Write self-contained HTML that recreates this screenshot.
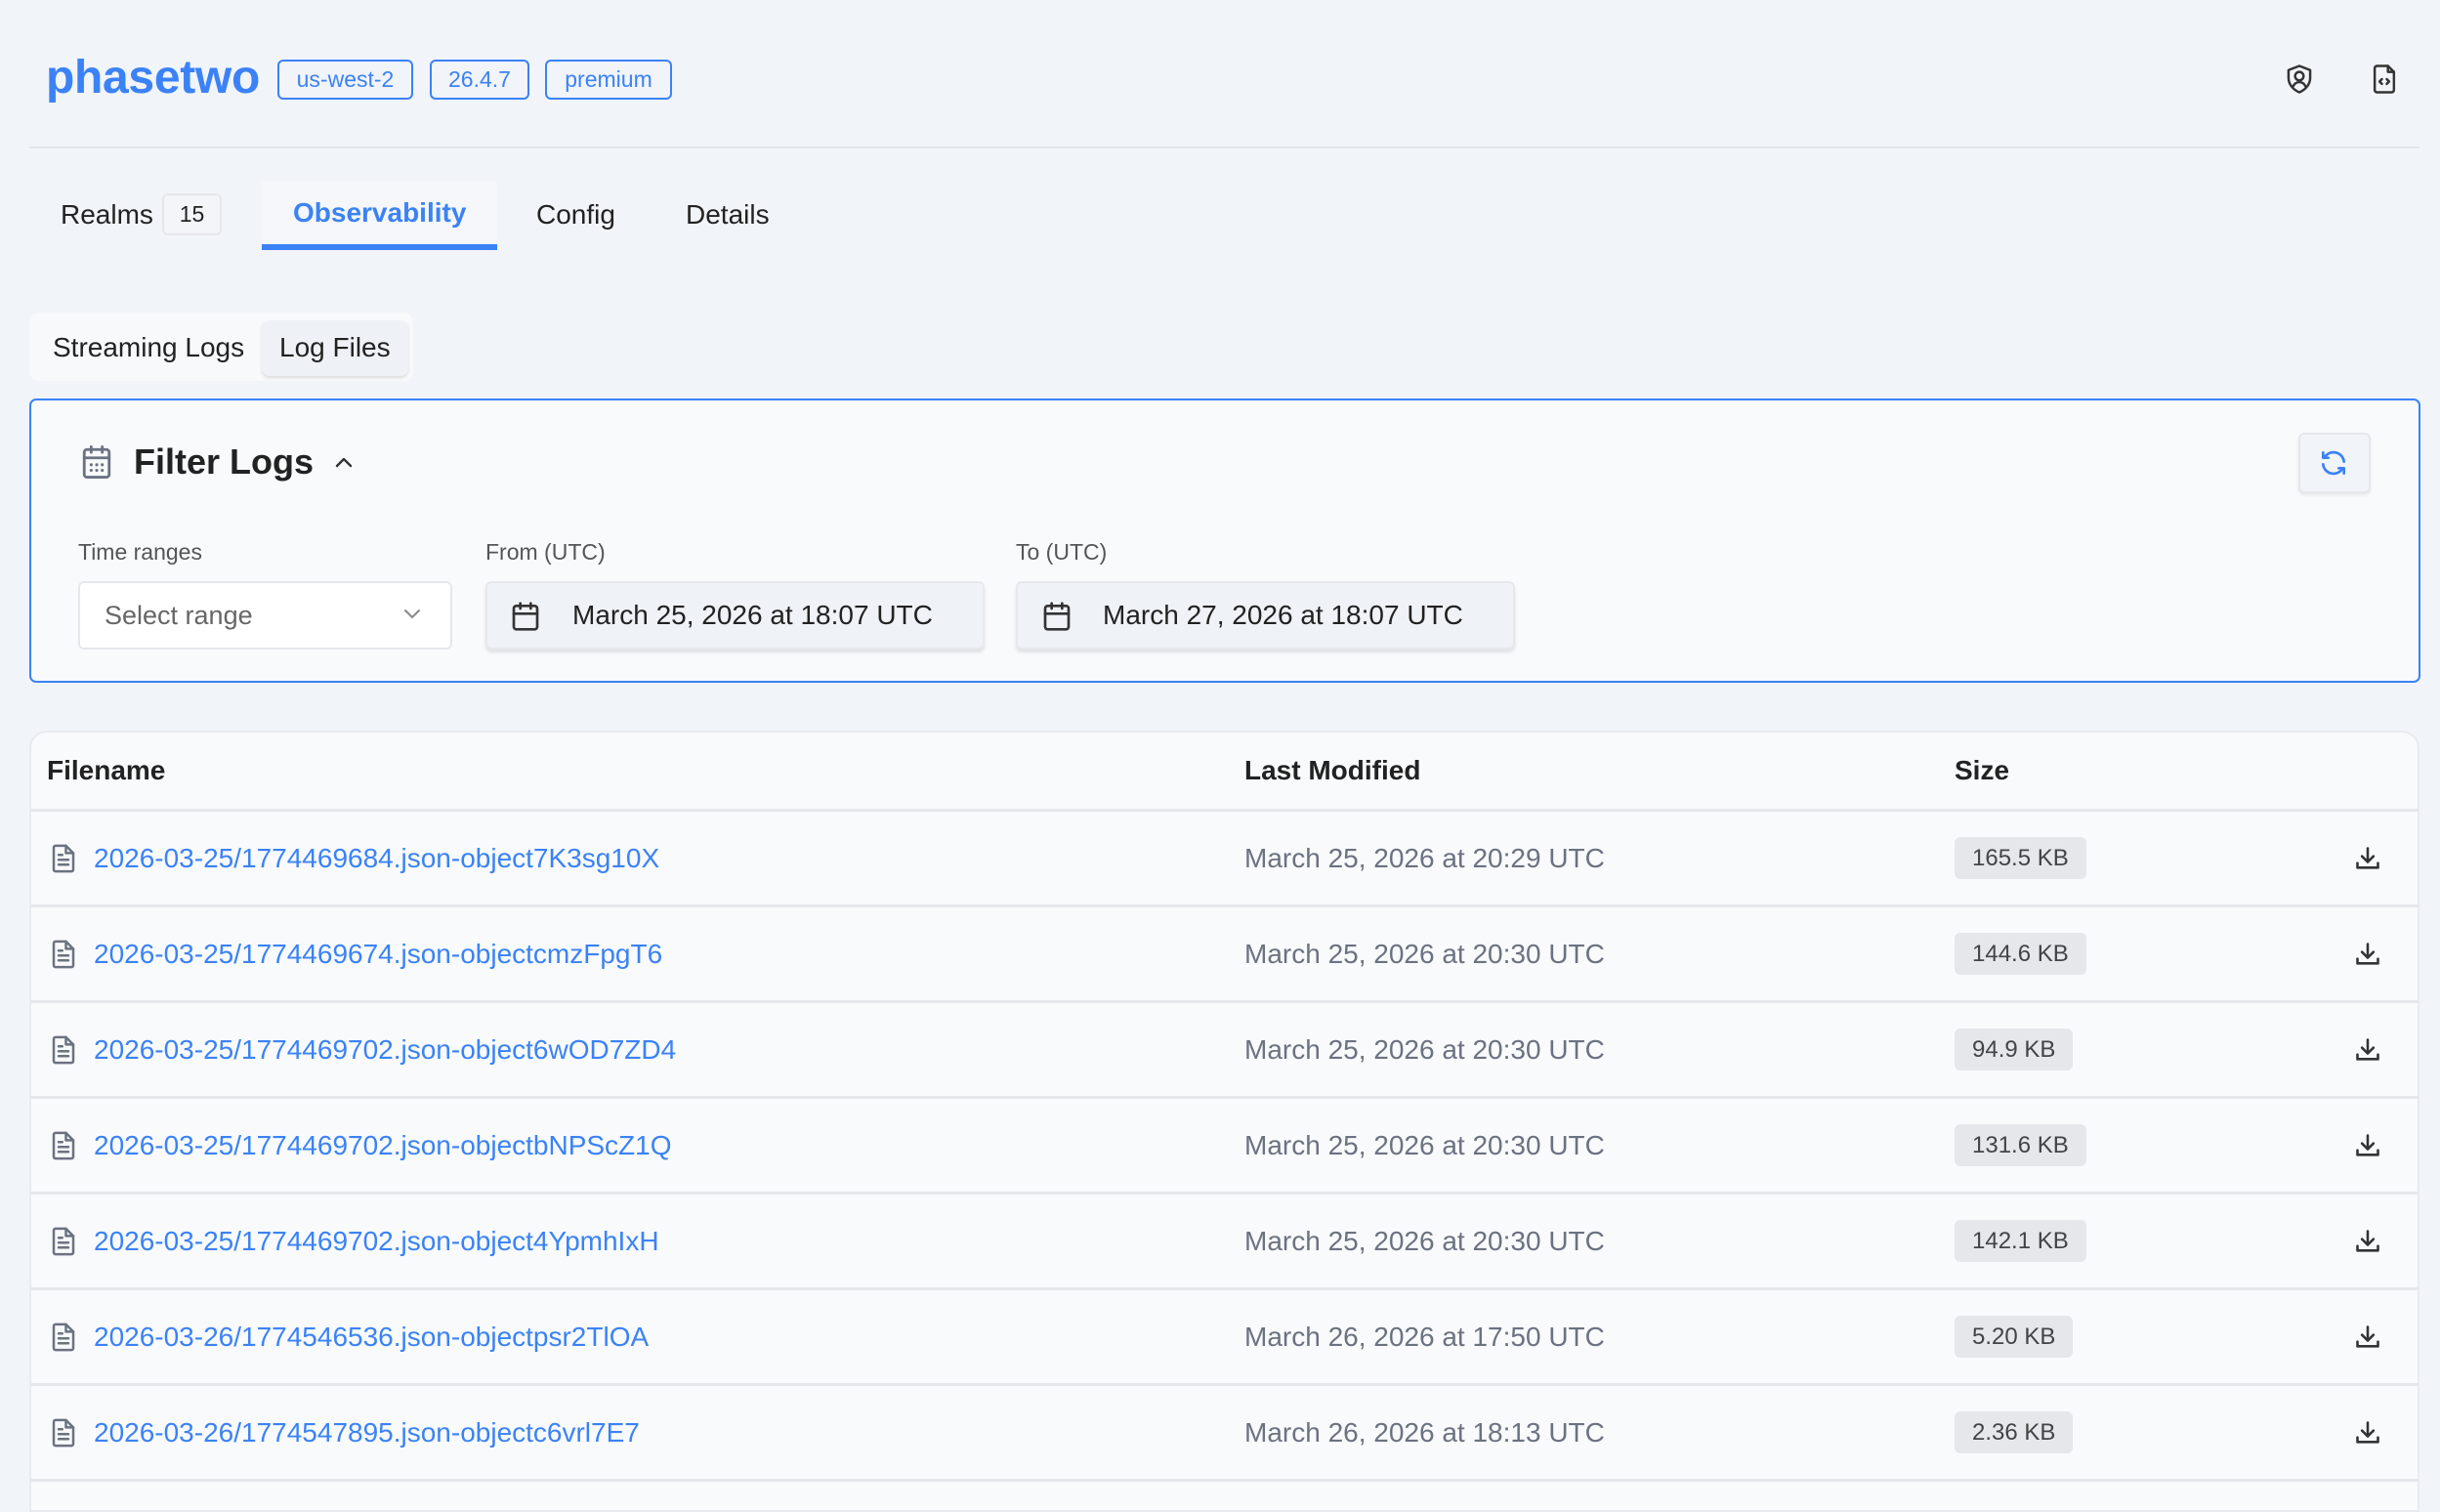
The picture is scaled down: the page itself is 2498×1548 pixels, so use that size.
<!DOCTYPE html>
<html><head><meta charset="utf-8">
<style>
*{box-sizing:border-box;margin:0;padding:0}
body{width:2498px;height:1522px;overflow:hidden;background:#f1f4f9;font-family:"Liberation Sans",Arial,sans-serif;position:relative;color:#222}
.a{position:absolute}
.badge{position:absolute;top:61px;height:41px;border:2px solid #3b82f6;border-radius:6px;color:#3b82f6;font-size:23px;display:flex;align-items:center;justify-content:center}
.tab{position:absolute;font-size:28px;color:#222;top:204px}
.lbl{position:absolute;top:552px;font-size:23px;color:#555}
.inp{position:absolute;top:595px;height:70px;border-radius:6px;display:flex;align-items:center;font-size:28px}
.row{position:absolute;left:32px;width:2444px;height:98px;border-bottom:3px solid #e5e7eb}
.row .ic{position:absolute;left:20px;top:33px}
.row .fn{position:absolute;left:64px;top:32px;font-size:28px;color:#3b82f6}
.row .dt{position:absolute;left:1242px;top:32px;font-size:28px;color:#6b7280}
.row .sz{position:absolute;left:1969px;top:26px;height:43px;padding:0 18px;background:#e5e7eb;border-radius:6px;font-size:24px;color:#444;display:flex;align-items:center}
.row .dl{position:absolute;left:2378px;top:33px}
</style></head><body>
<div class="a" style="left:47px;top:52px;font-size:48px;font-weight:bold;color:#3b82f6;letter-spacing:-0.3px">phasetwo</div>
<div class="badge" style="left:284px;width:139px">us-west-2</div>
<div class="badge" style="left:440px;width:102px">26.4.7</div>
<div class="badge" style="left:558px;width:130px">premium</div>
<svg class="a" style="left:2339px;top:65px" width="30" height="32" viewBox="0 0 24 26" fill="none" stroke="#333" stroke-width="2" stroke-linecap="round" stroke-linejoin="round"><path d="M12 2 L21 5.5 V12 C21 18 16.5 22 12 24 C7.5 22 3 18 3 12 V5.5 Z"/><circle cx="12" cy="10.5" r="3.5"/><path d="M6.5 19.5 C8 16.5 10 15.5 12 15.5 C14 15.5 16 16.5 17.5 19.5"/></svg>
<svg class="a" style="left:2428px;top:65px" width="26" height="32" viewBox="0 0 20 26" fill="none" stroke="#333" stroke-width="2" stroke-linecap="round" stroke-linejoin="round"><path d="M2 4 a2 2 0 0 1 2-2 H13 L18 7 V22 a2 2 0 0 1-2 2 H4 a2 2 0 0 1-2-2 Z"/><path d="M13 2 V7 H18"/><path d="M8 13 L6 15 L8 17 M12 13 L14 15 L12 17"/></svg>
<div class="a" style="left:30px;top:150px;width:2447px;height:2px;background:#e3e6eb"></div>

<div class="tab" style="left:62px">Realms</div>
<div class="a" style="left:166px;top:198px;width:61px;height:43px;border:2px solid #e5e7eb;border-radius:6px;font-size:23px;display:flex;align-items:center;justify-content:center;background:#f3f5f8">15</div>
<div class="a" style="left:268px;top:186px;width:241px;height:69px;background:#f5f7fa"></div>
<div class="tab" style="left:300px;top:202px;color:#3b82f6;font-weight:bold">Observability</div>
<div class="a" style="left:268px;top:250px;width:241px;height:6px;background:#3b82f6"></div>
<div class="tab" style="left:549px">Config</div>
<div class="tab" style="left:702px">Details</div>

<div class="a" style="left:30px;top:320px;width:393px;height:70px;background:#f8f9fb;border-radius:10px"></div>
<div class="a" style="left:54px;top:340px;font-size:28px">Streaming Logs</div>
<div class="a" style="left:268px;top:328px;width:150px;height:57px;background:#eef1f5;border-radius:8px;box-shadow:0 2px 3px rgba(0,0,0,.12)"></div>
<div class="a" style="left:286px;top:340px;font-size:28px">Log Files</div>

<div class="a" style="left:30px;top:408px;width:2448px;height:291px;border:2px solid #3b82f6;border-radius:7px;background:#f8fafc"></div>
<svg class="a" style="left:82px;top:454px" width="34" height="38" viewBox="0 0 24 26" fill="none" stroke="#6b7280" stroke-width="2" stroke-linecap="round"><rect x="3" y="4" width="18" height="20" rx="2"/><path d="M3 10 H21 M8 2 V6 M16 2 V6"/><path d="M8 15h.01M12 15h.01M16 15h.01M8 19h.01M12 19h.01M16 19h.01" stroke-width="2.2"/></svg>
<div class="a" style="left:137px;top:452px;font-size:36px;font-weight:bold;color:#222">Filter Logs</div>
<svg class="a" style="left:340px;top:465px" width="24" height="16" viewBox="0 0 24 16" fill="none" stroke="#333" stroke-width="2.4" stroke-linecap="round" stroke-linejoin="round"><path d="M5 12 L12 5 L19 12"/></svg>
<div class="a" style="left:2353px;top:443px;width:74px;height:62px;background:#f1f4f9;border:2px solid #e5e7eb;border-radius:6px;box-shadow:0 2px 3px rgba(0,0,0,.08)"></div>
<svg class="a" style="left:2373px;top:458px" width="32" height="32" viewBox="0 0 24 24" fill="none" stroke="#3b82f6" stroke-width="2" stroke-linecap="round" stroke-linejoin="round"><path d="M20 11 A8 8 0 0 0 5 8 M4 4 V8 H8"/><path d="M4 13 A8 8 0 0 0 19 16 M20 20 V16 H16"/></svg>

<div class="lbl" style="left:80px">Time ranges</div>
<div class="lbl" style="left:497px">From (UTC)</div>
<div class="lbl" style="left:1040px">To (UTC)</div>
<div class="inp" style="left:80px;width:383px;background:#fff;border:2px solid #e5e7eb;color:#666;padding-left:25px;font-size:27px">Select range</div>
<svg class="a" style="left:411px;top:622px" width="22" height="14" viewBox="0 0 22 14" fill="none" stroke="#888" stroke-width="2" stroke-linecap="round"><path d="M4 3 L11 10 L18 3"/></svg>
<div class="inp" style="left:497px;width:511px;background:#eff2f7;border:2px solid #e6e8ec;box-shadow:0 3px 3px rgba(0,0,0,.1);padding-left:87px;color:#222">March 25, 2026 at 18:07 UTC</div>
<div class="inp" style="left:1040px;width:511px;background:#eff2f7;border:2px solid #e6e8ec;box-shadow:0 3px 3px rgba(0,0,0,.1);padding-left:87px;color:#222">March 27, 2026 at 18:07 UTC</div>
<svg class="a" style="left:522px;top:615px" width="32" height="32" viewBox="0 0 24 24" fill="none" stroke="#333" stroke-width="2" stroke-linecap="round"><rect x="3" y="4" width="18" height="18" rx="2"/><path d="M3 10 H21 M8 2 V6 M16 2 V6"/></svg>
<svg class="a" style="left:1066px;top:615px" width="32" height="32" viewBox="0 0 24 24" fill="none" stroke="#333" stroke-width="2" stroke-linecap="round"><rect x="3" y="4" width="18" height="18" rx="2"/><path d="M3 10 H21 M8 2 V6 M16 2 V6"/></svg>

<div class="a" style="left:30px;top:748px;width:2447px;height:800px;background:#f8fafc;border:2px solid #e8ebef;border-radius:18px 18px 0 0"></div>
<div class="a" style="left:48px;top:773px;font-size:28px;font-weight:bold">Filename</div>
<div class="a" style="left:1274px;top:773px;font-size:28px;font-weight:bold">Last Modified</div>
<div class="a" style="left:2001px;top:773px;font-size:28px;font-weight:bold">Size</div>
<div class="a" style="left:32px;top:828px;width:2444px;height:3px;background:#e5e7eb"></div>

<div class="a" style="left:0;top:831px">
<div class="row" style="top:0"><svg class="ic" width="26" height="30" viewBox="0 0 20 24" fill="none" stroke="#6b7280" stroke-width="2" stroke-linejoin="round" stroke-linecap="round"><path d="M2 3 a1.5 1.5 0 0 1 1.5-1.5 H12 L18 7.5 V21 a1.5 1.5 0 0 1-1.5 1.5 H3.5 A1.5 1.5 0 0 1 2 21 Z"/><path d="M12 1.5 V7.5 H18 M6 9 H9 M6 13 H14 M6 17 H14"/></svg><div class="fn">2026-03-25/1774469684.json-object7K3sg10X</div><div class="dt">March 25, 2026 at 20:29 UTC</div><div class="sz">165.5 KB</div><svg class="dl" width="28" height="30" viewBox="0 0 24 24" fill="none" stroke="#333" stroke-width="2.2" stroke-linecap="round" stroke-linejoin="round"><path d="M12 3 V15 M7 10 L12 15 L17 10 M3 16 V20 H21 V16"/></svg></div>
<div class="row" style="top:98px"><svg class="ic" width="26" height="30" viewBox="0 0 20 24" fill="none" stroke="#6b7280" stroke-width="2" stroke-linejoin="round" stroke-linecap="round"><path d="M2 3 a1.5 1.5 0 0 1 1.5-1.5 H12 L18 7.5 V21 a1.5 1.5 0 0 1-1.5 1.5 H3.5 A1.5 1.5 0 0 1 2 21 Z"/><path d="M12 1.5 V7.5 H18 M6 9 H9 M6 13 H14 M6 17 H14"/></svg><div class="fn">2026-03-25/1774469674.json-objectcmzFpgT6</div><div class="dt">March 25, 2026 at 20:30 UTC</div><div class="sz">144.6 KB</div><svg class="dl" width="28" height="30" viewBox="0 0 24 24" fill="none" stroke="#333" stroke-width="2.2" stroke-linecap="round" stroke-linejoin="round"><path d="M12 3 V15 M7 10 L12 15 L17 10 M3 16 V20 H21 V16"/></svg></div>
<div class="row" style="top:196px"><svg class="ic" width="26" height="30" viewBox="0 0 20 24" fill="none" stroke="#6b7280" stroke-width="2" stroke-linejoin="round" stroke-linecap="round"><path d="M2 3 a1.5 1.5 0 0 1 1.5-1.5 H12 L18 7.5 V21 a1.5 1.5 0 0 1-1.5 1.5 H3.5 A1.5 1.5 0 0 1 2 21 Z"/><path d="M12 1.5 V7.5 H18 M6 9 H9 M6 13 H14 M6 17 H14"/></svg><div class="fn">2026-03-25/1774469702.json-object6wOD7ZD4</div><div class="dt">March 25, 2026 at 20:30 UTC</div><div class="sz">94.9 KB</div><svg class="dl" width="28" height="30" viewBox="0 0 24 24" fill="none" stroke="#333" stroke-width="2.2" stroke-linecap="round" stroke-linejoin="round"><path d="M12 3 V15 M7 10 L12 15 L17 10 M3 16 V20 H21 V16"/></svg></div>
<div class="row" style="top:294px"><svg class="ic" width="26" height="30" viewBox="0 0 20 24" fill="none" stroke="#6b7280" stroke-width="2" stroke-linejoin="round" stroke-linecap="round"><path d="M2 3 a1.5 1.5 0 0 1 1.5-1.5 H12 L18 7.5 V21 a1.5 1.5 0 0 1-1.5 1.5 H3.5 A1.5 1.5 0 0 1 2 21 Z"/><path d="M12 1.5 V7.5 H18 M6 9 H9 M6 13 H14 M6 17 H14"/></svg><div class="fn">2026-03-25/1774469702.json-objectbNPScZ1Q</div><div class="dt">March 25, 2026 at 20:30 UTC</div><div class="sz">131.6 KB</div><svg class="dl" width="28" height="30" viewBox="0 0 24 24" fill="none" stroke="#333" stroke-width="2.2" stroke-linecap="round" stroke-linejoin="round"><path d="M12 3 V15 M7 10 L12 15 L17 10 M3 16 V20 H21 V16"/></svg></div>
<div class="row" style="top:392px"><svg class="ic" width="26" height="30" viewBox="0 0 20 24" fill="none" stroke="#6b7280" stroke-width="2" stroke-linejoin="round" stroke-linecap="round"><path d="M2 3 a1.5 1.5 0 0 1 1.5-1.5 H12 L18 7.5 V21 a1.5 1.5 0 0 1-1.5 1.5 H3.5 A1.5 1.5 0 0 1 2 21 Z"/><path d="M12 1.5 V7.5 H18 M6 9 H9 M6 13 H14 M6 17 H14"/></svg><div class="fn">2026-03-25/1774469702.json-object4YpmhIxH</div><div class="dt">March 25, 2026 at 20:30 UTC</div><div class="sz">142.1 KB</div><svg class="dl" width="28" height="30" viewBox="0 0 24 24" fill="none" stroke="#333" stroke-width="2.2" stroke-linecap="round" stroke-linejoin="round"><path d="M12 3 V15 M7 10 L12 15 L17 10 M3 16 V20 H21 V16"/></svg></div>
<div class="row" style="top:490px"><svg class="ic" width="26" height="30" viewBox="0 0 20 24" fill="none" stroke="#6b7280" stroke-width="2" stroke-linejoin="round" stroke-linecap="round"><path d="M2 3 a1.5 1.5 0 0 1 1.5-1.5 H12 L18 7.5 V21 a1.5 1.5 0 0 1-1.5 1.5 H3.5 A1.5 1.5 0 0 1 2 21 Z"/><path d="M12 1.5 V7.5 H18 M6 9 H9 M6 13 H14 M6 17 H14"/></svg><div class="fn">2026-03-26/1774546536.json-objectpsr2TlOA</div><div class="dt">March 26, 2026 at 17:50 UTC</div><div class="sz">5.20 KB</div><svg class="dl" width="28" height="30" viewBox="0 0 24 24" fill="none" stroke="#333" stroke-width="2.2" stroke-linecap="round" stroke-linejoin="round"><path d="M12 3 V15 M7 10 L12 15 L17 10 M3 16 V20 H21 V16"/></svg></div>
<div class="row" style="top:588px"><svg class="ic" width="26" height="30" viewBox="0 0 20 24" fill="none" stroke="#6b7280" stroke-width="2" stroke-linejoin="round" stroke-linecap="round"><path d="M2 3 a1.5 1.5 0 0 1 1.5-1.5 H12 L18 7.5 V21 a1.5 1.5 0 0 1-1.5 1.5 H3.5 A1.5 1.5 0 0 1 2 21 Z"/><path d="M12 1.5 V7.5 H18 M6 9 H9 M6 13 H14 M6 17 H14"/></svg><div class="fn">2026-03-26/1774547895.json-objectc6vrl7E7</div><div class="dt">March 26, 2026 at 18:13 UTC</div><div class="sz">2.36 KB</div><svg class="dl" width="28" height="30" viewBox="0 0 24 24" fill="none" stroke="#333" stroke-width="2.2" stroke-linecap="round" stroke-linejoin="round"><path d="M12 3 V15 M7 10 L12 15 L17 10 M3 16 V20 H21 V16"/></svg></div>
</div>
</body></html>
